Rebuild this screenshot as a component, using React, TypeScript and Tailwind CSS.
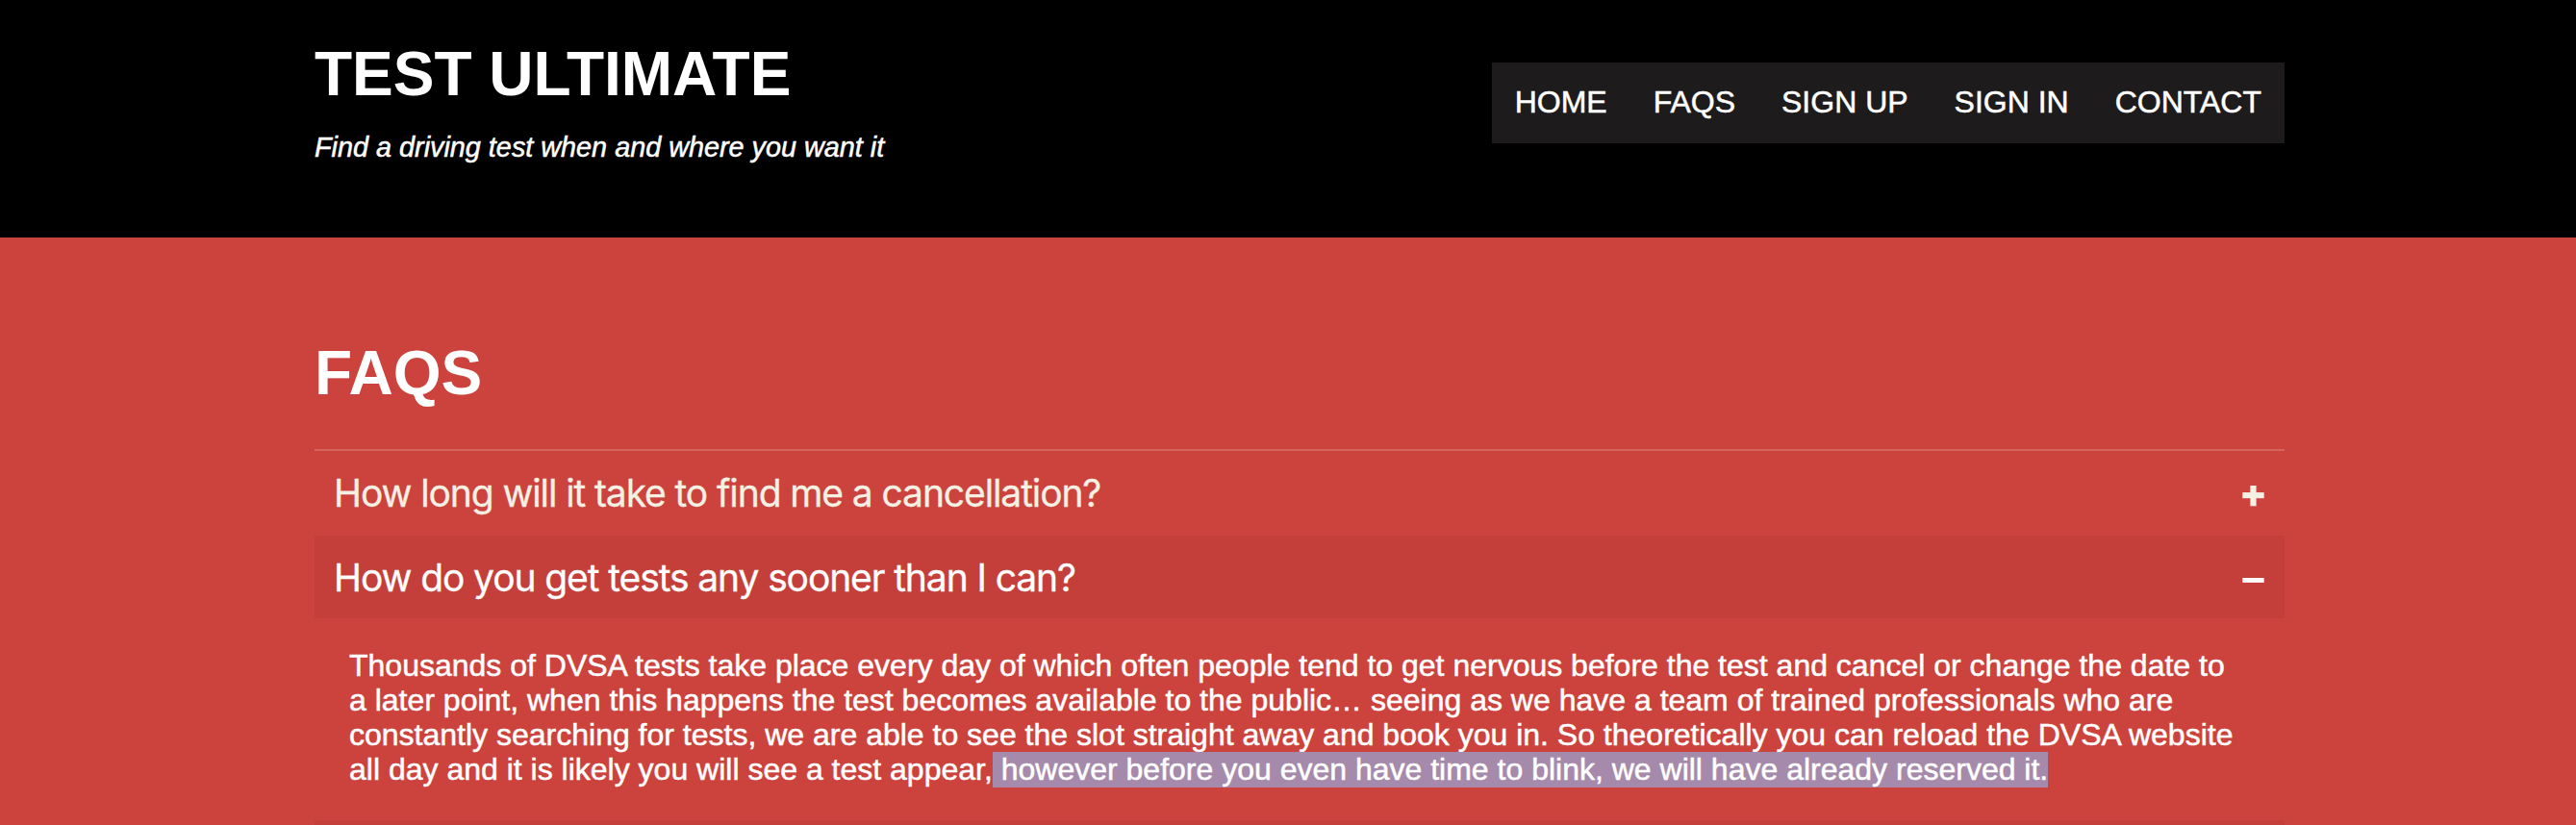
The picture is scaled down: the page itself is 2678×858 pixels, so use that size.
import { useState } from "react";
import { clsx } from "clsx";

const navLinks = [
  { href: "#home", label: "HOME" },
  { href: "#faqs", label: "FAQS" },
  { href: "#sign-up", label: "SIGN UP" },
  { href: "#sign-in", label: "SIGN IN" },
  { href: "#contact", label: "CONTACT" },
];

type FaqItemProps = {
  question: string;
  open: boolean;
  onToggle: () => void;
  children?: React.ReactNode;
};

function ToggleIcon({ open }: { open: boolean }) {
  return (
    <svg className="mt-1.5" width="23" height="24" viewBox="0 0 23 24" fill="currentColor" aria-hidden="true">
      <rect x="0.3" y={open ? 10 : 9.1} width="22.4" height={open ? 4.9 : 6.1} />
      {!open && <rect x="8.4" y="2" width="6.2" height="21.3" />}
    </svg>
  );
}

function FaqItem({ question, open, onToggle, children }: FaqItemProps) {
  return (
    <div>
      <button
        type="button"
        onClick={onToggle}
        aria-expanded={open}
        className={clsx(
          "flex h-[86px] w-full items-center justify-between pr-[21px] pl-5 text-left",
          open ? "bg-[#c53f3a] text-white" : "text-[#f4f1e4]"
        )}
      >
        <span className="pt-0.5 font-['Inter',sans-serif] text-[39px] leading-[48px] tracking-[-1.1px] [-webkit-text-stroke:0.3px_currentColor]">
          {question}
        </span>
        <ToggleIcon open={open} />
      </button>
      {open && children}
    </div>
  );
}

export default function App() {
  const [active, setActive] = useState(1);
  const toggle = (i: number) => setActive(active === i ? -1 : i);

  return (
    <div className="h-[858px] overflow-hidden bg-[#cc433d] font-['Liberation_Sans',Arial,sans-serif] text-white">
      <header className="h-[247px] bg-black pl-[327px]">
        <div className="flex w-[2048px] items-start justify-between">
          <div className="pt-[41px]">
            <h1 className="text-[64px] leading-[72px] font-bold">TEST ULTIMATE</h1>
            <p className="mt-6 text-[28.8px] leading-8 italic [-webkit-text-stroke:0.5px_currentColor]">
              Find a driving test when and where you want it
            </p>
          </div>
          <nav className="mt-[65px] flex h-[84px] gap-12 bg-[#1d1b1c] px-6 pt-[23px] text-[32px] leading-9 [-webkit-text-stroke:0.5px_currentColor]">
            {navLinks.map((link) => (
              <a key={link.href} href={link.href}>
                {link.label}
              </a>
            ))}
          </nav>
        </div>
      </header>

      <main className="ml-[327px] w-[2048px]">
        <h2 className="pt-[105px] text-[64px] leading-[72px] font-bold">FAQS</h2>
        <div className="mt-[43px] flex flex-col gap-0.5 border-t-2 border-[#d6655f]">
          <FaqItem
            question="How long will it take to find me a cancellation?"
            open={active === 0}
            onToggle={() => toggle(0)}
          />
          <FaqItem
            question="How do you get tests any sooner than I can?"
            open={active === 1}
            onToggle={() => toggle(1)}
          >
            <p className="h-[208px] pt-[31px] pl-9 text-[32px] leading-9 whitespace-nowrap [-webkit-text-stroke:0.5px_currentColor]">
              Thousands of DVSA tests take place every day of which often people tend to get nervous before the test and cancel or change the date to
              <br />
              a later point, when this happens the test becomes available to the public… seeing as we have a team of trained professionals who are
              <br />
              constantly searching for tests, we are able to see the slot straight away and book you in. So theoretically you can reload the DVSA website
              <br />
              all day and it is likely you will see a test appear,
              <mark className="bg-[#a58aab] pb-px text-white"> however before you even have time to blink, we will have already reserved it.</mark>
            </p>
          </FaqItem>
          <div className="h-[86px] bg-[#c53f3a]" />
        </div>
      </main>
    </div>
  );
}
